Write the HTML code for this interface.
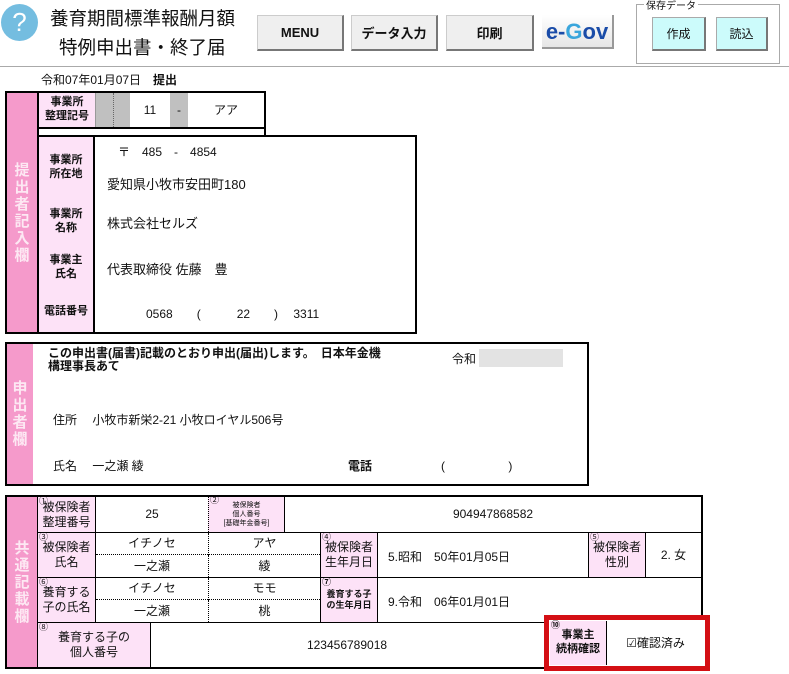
<!DOCTYPE html>
<html><head><meta charset="utf-8">
<style>
*{box-sizing:border-box;margin:0;padding:0}
body{width:789px;height:674px;background:#fff;position:relative;overflow:hidden;font-family:"Liberation Sans","Noto Sans CJK JP",sans-serif;color:#111}
.a{position:absolute}
.btn{position:absolute;background:#efefef;border:1px solid #ccc;border-right:2px solid #777;border-bottom:2px solid #777;font-weight:bold;font-size:13px;display:flex;align-items:center;justify-content:center}
.cb{position:absolute;background:#ccfbfb;border:1px solid #aaa;border-right:2px solid #777;border-bottom:2px solid #777;font-size:12px;display:flex;align-items:center;justify-content:center}
.box{position:absolute;border:2px solid #000}
.c{position:absolute;display:flex;align-items:center;justify-content:center;text-align:center;font-size:12px;line-height:1.25}
.lp{background:#fde2f7}
.stripe{position:absolute;background:#f59acb;color:#fde8f3;font-weight:bold;font-size:15px;line-height:17px;display:flex;align-items:center;justify-content:center;text-align:center}
.sm{font-size:11px}
.t{position:absolute;font-size:12px;white-space:nowrap}
.n{position:absolute;font-size:9px;top:-1px;left:1px}
</style></head><body>
<div class="a" style="left:1px;top:4px;width:37px;height:37px;border-radius:50%;background:#74bde0;color:#fff;font-size:26px;text-align:center;line-height:37px">?</div>
<div class="t" style="left:50px;top:5px;font-size:18.5px">養育期間標準報酬月額</div>
<div class="t" style="left:59px;top:34px;font-size:18.5px">特例申出書・終了届</div>
<div class="btn" style="left:257px;top:15px;width:87px;height:36px">MENU</div>
<div class="btn" style="left:351px;top:15px;width:87px;height:36px">データ入力</div>
<div class="btn" style="left:446px;top:15px;width:88px;height:36px">印刷</div>
<div class="a" style="left:542px;top:15px;width:72px;height:34px;background:linear-gradient(#fff,#e6e6e6);border-right:2px solid #999;border-bottom:2px solid #999;font-weight:bold;font-size:22px;text-align:center;line-height:34px"><span style="color:#1a4ca8">e-</span><span style="color:#3aa6dc">G</span><span style="color:#1a4ca8">ov</span></div>
<div class="a" style="left:636px;top:4px;width:144px;height:60px;border:1px solid #aaa"></div>
<div class="t" style="left:644px;top:-3px;font-size:10px;background:#fff;padding:0 2px">保存データ</div>
<div class="cb" style="left:652px;top:17px;width:54px;height:34px">作成</div>
<div class="cb" style="left:716px;top:17px;width:52px;height:34px">読込</div>
<div class="a" style="left:0;top:66px;width:789px;height:1px;background:#aaa"></div>
<div class="t" style="left:41px;top:71px">令和07年01月07日　<b>提出</b></div>

<!-- section 1 -->
<div class="box" style="left:5px;top:91px;width:34px;height:243px;border-right:0"></div>
<div class="stripe" style="left:7px;top:93px;width:30px;height:239px">提<br>出<br>者<br>記<br>入<br>欄</div>
<div class="box" style="left:37px;top:91px;width:229px;height:38px"></div>
<div class="c lp sm" style="left:39px;top:93px;width:56px;height:34px;font-weight:bold">事業所<br>整理記号</div>
<div class="a" style="left:95px;top:93px;width:35px;height:34px;background:#c0c0c0;border-left:1px solid #999"></div>
<div class="a" style="left:113px;top:93px;width:1px;height:34px;border-left:1px dotted #666"></div>
<div class="c" style="left:130px;top:93px;width:40px;height:34px">11</div>
<div class="c" style="left:170px;top:93px;width:18px;height:34px;background:#c0c0c0">-</div>
<div class="c" style="left:188px;top:93px;width:76px;height:34px">アア</div>
<div class="box" style="left:37px;top:127px;width:229px;height:10px;border-top:0;border-bottom:0"></div>
<div class="box" style="left:37px;top:135px;width:380px;height:199px"></div>
<div class="a lp" style="left:39px;top:137px;width:54px;height:195px"></div>
<div class="a" style="left:93px;top:137px;width:2px;height:195px;background:#000"></div>
<div class="c sm" style="left:39px;top:153px;width:54px;height:30px;font-weight:bold">事業所<br>所在地</div>
<div class="c sm" style="left:39px;top:207px;width:54px;height:30px;font-weight:bold">事業所<br>名称</div>
<div class="c sm" style="left:39px;top:253px;width:54px;height:30px;font-weight:bold">事業主<br>氏名</div>
<div class="c sm" style="left:39px;top:303px;width:54px;height:18px;font-weight:bold">電話番号</div>
<div class="t" style="left:118px;top:143px">〒　485　-　4854</div>
<div class="t" style="left:107px;top:174px;font-size:13px">愛知県小牧市安田町180</div>
<div class="t" style="left:107px;top:213px;font-size:13px">株式会社セルズ</div>
<div class="t" style="left:107px;top:259px;font-size:13px">代表取締役 佐藤　豊</div>
<div class="t" style="left:146px;top:305px">0568　　(　　　22　　)　 3311</div>

<!-- section 2 -->
<div class="box" style="left:5px;top:342px;width:584px;height:144px"></div>
<div class="stripe" style="left:7px;top:344px;width:26px;height:140px">申<br>出<br>者<br>欄</div>
<div class="t" style="left:48px;top:347px;font-weight:bold;line-height:13px">この申出書(届書)記載のとおり申出(届出)します。　日本年金機<br>構理事長あて</div>
<div class="t" style="left:452px;top:350px">令和</div>
<div class="a" style="left:479px;top:349px;width:84px;height:18px;background:#e3e3e3"></div>
<div class="t" style="left:53px;top:411px">住所　 小牧市新栄2-21  小牧ロイヤル506号</div>
<div class="t" style="left:53px;top:457px">氏名　 一之瀬 綾</div>
<div class="t" style="left:348px;top:457px;font-weight:bold">電話</div>
<div class="t" style="left:441px;top:457px">(　　　　　 )</div>

<!-- section 3 -->
<div class="box" style="left:5px;top:495px;width:698px;height:174px"></div>
<div class="stripe" style="left:7px;top:497px;width:30px;height:170px">共<br>通<br>記<br>載<br>欄</div>
<div class="a" style="left:37px;top:497px;width:1px;height:170px;background:#000"></div>
<div class="a" style="left:37px;top:532px;width:664px;height:1px;background:#000"></div>
<div class="a" style="left:37px;top:577px;width:664px;height:1px;background:#000"></div>
<div class="a" style="left:37px;top:622px;width:664px;height:1px;background:#000"></div>
<div class="c lp" style="left:38px;top:497px;width:57px;height:35px;font-size:12px"><span class="n">①</span>被保険者<br>整理番号</div>
<div class="a" style="left:95px;top:497px;width:1px;height:125px;background:#000"></div>
<div class="c" style="left:96px;top:497px;width:112px;height:35px">25</div>
<div class="c lp" style="left:208px;top:497px;width:77px;height:35px;font-size:7px;line-height:9px;border-left:1px dotted #000;border-right:1px solid #000"><span class="n">②</span>被保険者<br>個人番号<br>[基礎年金番号]</div>
<div class="c" style="left:285px;top:497px;width:416px;height:35px">904947868582</div>
<div class="c lp" style="left:38px;top:533px;width:57px;height:44px"><span class="n">③</span>被保険者<br>氏名</div>
<div class="c" style="left:96px;top:533px;width:112px;height:22px;border-bottom:1px dotted #000">イチノセ</div>
<div class="c" style="left:96px;top:555px;width:112px;height:22px">一之瀬</div>
<div class="c" style="left:208px;top:533px;width:112px;height:22px;border-bottom:1px dotted #000;border-left:1px dotted #000">アヤ</div>
<div class="c" style="left:208px;top:555px;width:112px;height:22px;border-left:1px dotted #000">綾</div>
<div class="c lp" style="left:320px;top:533px;width:58px;height:44px;border-left:1px solid #000;border-right:1px solid #000"><span class="n">④</span>被保険者<br>生年月日</div>
<div class="t" style="left:388px;top:548px">5.昭和　50年01月05日</div>
<div class="c lp" style="left:588px;top:533px;width:58px;height:44px;border-left:1px solid #000;border-right:1px solid #000"><span class="n">⑤</span>被保険者<br>性別</div>
<div class="c" style="left:646px;top:533px;width:55px;height:44px">2. 女</div>
<div class="c lp" style="left:38px;top:578px;width:57px;height:44px"><span class="n">⑥</span>養育する<br>子の氏名</div>
<div class="c" style="left:96px;top:578px;width:112px;height:22px;border-bottom:1px dotted #000">イチノセ</div>
<div class="c" style="left:96px;top:600px;width:112px;height:22px">一之瀬</div>
<div class="c" style="left:208px;top:578px;width:112px;height:22px;border-bottom:1px dotted #000;border-left:1px dotted #000">モモ</div>
<div class="c" style="left:208px;top:600px;width:112px;height:22px;border-left:1px dotted #000">桃</div>
<div class="c lp" style="left:320px;top:578px;width:58px;height:44px;border-left:1px solid #000;border-right:1px solid #000;font-size:9px;font-weight:bold"><span class="n">⑦</span>養育する子<br>の生年月日</div>
<div class="t" style="left:388px;top:593px">9.令和　06年01月01日</div>
<div class="c lp" style="left:38px;top:623px;width:113px;height:44px;border-right:1px solid #000"><span class="n">⑧</span>養育する子の<br>個人番号</div>
<div class="c" style="left:151px;top:623px;width:392px;height:44px">123456789018</div>
<div class="a" style="left:544px;top:615px;width:166px;height:56px;border:5px solid #d40f14;background:#fff"></div>
<div class="c lp" style="left:550px;top:621px;width:57px;height:44px;border-right:1px solid #000;font-size:11px;font-weight:bold"><span class="n">⑩</span>事業主<br>続柄確認</div>
<div class="c" style="left:607px;top:621px;width:97px;height:44px">☑確認済み</div>
</body></html>
